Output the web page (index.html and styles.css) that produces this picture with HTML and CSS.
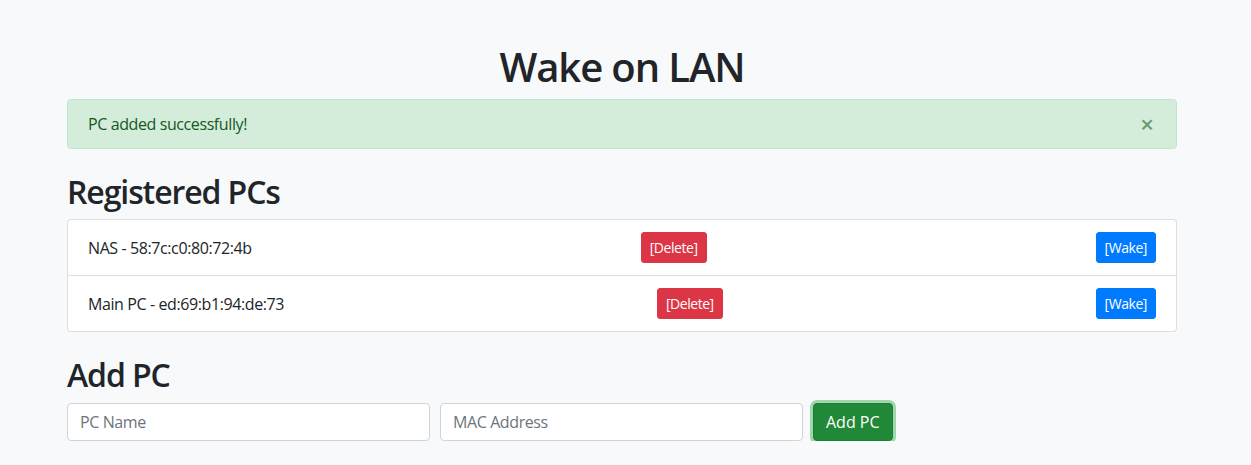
FILE: index.html
```html
<!DOCTYPE html>
<html lang="en">
<head>
<meta charset="utf-8">
<title>Wake on LAN</title>
<link rel="stylesheet" href="styles.css">
</head>
<body>
<div class="container">
  <h1 class="title">Wake on LAN</h1>
  <div class="alert">
    <span>PC added successfully!</span>
    <button class="close" type="button" aria-label="Close">&times;</button>
  </div>
  <h2 class="section-title">Registered PCs</h2>
  <ul class="list-group">
    <li class="list-item">
      <span>NAS - 58:7c:c0:80:72:4b</span>
      <button class="btn btn-sm btn-danger" type="button">[Delete]</button>
      <button class="btn btn-sm btn-primary" type="button">[Wake]</button>
    </li>
    <li class="list-item">
      <span>Main PC - ed:69:b1:94:de:73</span>
      <button class="btn btn-sm btn-danger" type="button">[Delete]</button>
      <button class="btn btn-sm btn-primary" type="button">[Wake]</button>
    </li>
  </ul>
  <h2 class="section-title">Add PC</h2>
  <form class="add-form">
    <input class="form-control" type="text" placeholder="PC Name">
    <input class="form-control" type="text" placeholder="MAC Address">
    <button class="btn btn-success" type="button">Add PC</button>
  </form>
</div>
</body>
</html>
```

FILE: styles.css
```css
html, body {
  margin: 0;
}
body {
  padding-right: 7px;
  background: #f8f9fa;
  color: #212529;
  font-family: "Open Sans", "Noto Sans", sans-serif;
  font-size: 16px;
  line-height: 1.5;
  letter-spacing: -0.4px;
}
.container {
  width: 1110px;
  margin: 0 auto;
}
.title {
  margin: 43px 0 8px;
  font-size: 40px;
  font-weight: 600;
  line-height: 1.2;
  letter-spacing: -1.1px;
  text-align: center;
}
.alert {
  display: flex;
  justify-content: space-between;
  align-items: center;
  padding: 12px 20px;
  margin-bottom: 16px;
  background: #d4edda;
  border: 1px solid #c3e6cb;
  border-radius: 4px;
  color: #155724;
}
.close {
  padding: 0;
  margin-right: 2px;
  background: transparent;
  border: 0;
  font-family: "Open Sans", sans-serif;
  font-size: 24px;
  font-weight: 600;
  line-height: 1;
  letter-spacing: 0;
  color: #155724;
  opacity: 0.55;
  cursor: pointer;
}
.section-title {
  margin: 24px 0 8px;
  font-size: 32px;
  font-weight: 600;
  line-height: 1.2;
  letter-spacing: -1.1px;
}
.list-group {
  list-style: none;
  margin: 0;
  padding: 0;
  background: #fff;
  border: 1px solid rgba(0, 0, 0, 0.125);
  border-radius: 4px;
}
.list-item {
  display: flex;
  justify-content: space-between;
  align-items: center;
  padding: 12px 20px;
}
.list-item + .list-item {
  border-top: 1px solid rgba(0, 0, 0, 0.125);
}
.btn {
  display: inline-block;
  font-family: inherit;
  font-weight: 400;
  color: #fff;
  border: 1px solid transparent;
  border-radius: 4px;
  padding: 6px 12px;
  font-size: 16px;
  line-height: 1.5;
  letter-spacing: 0;
  cursor: pointer;
}
.btn-sm {
  padding: 4px 8px;
  font-size: 14px;
  line-height: 1.5;
  letter-spacing: -0.45px;
  border-radius: 3px;
}
.btn-danger {
  background: #dc3545;
  border-color: #dc3545;
}
.btn-primary {
  background: #007bff;
  border-color: #007bff;
}
.btn-success {
  background: #218838;
  border-color: #1e7e34;
  box-shadow: 0 0 0 3px rgba(72, 180, 97, 0.5);
}
.add-form {
  display: flex;
  align-items: center;
  gap: 10px;
}
.form-control {
  box-sizing: border-box;
  width: 363px;
  height: 38px;
  padding: 6px 12px;
  font-family: inherit;
  font-size: 16px;
  line-height: 1.5;
  letter-spacing: -0.4px;
  color: #495057;
  background: #fff;
  border: 1px solid #ced4da;
  border-radius: 4px;
}
.form-control::placeholder {
  color: #6c757d;
}
```
